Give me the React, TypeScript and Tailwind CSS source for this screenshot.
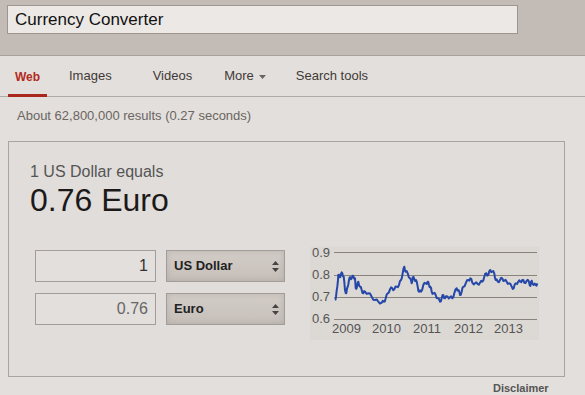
import React from 'react';

const raw: [number, number][] = [
  [90, 180], [93, 170], [97, 140], [100, 105], [104, 112], [108, 102], [112, 100], [116, 110], [120, 150],
  [124, 160], [128, 140], [132, 120], [136, 112], [140, 115], [145, 108], [150, 115], [152, 145], [156, 140],
  [160, 125], [165, 140], [170, 150], [175, 160], [180, 155], [190, 160], [200, 170], [210, 180], [220, 185],
  [230, 188], [237, 185], [242, 175], [248, 160], [255, 148], [262, 145], [268, 148], [275, 140], [282, 135],
  [288, 120], [293, 100], [298, 80], [302, 95], [308, 100], [315, 115], [320, 130], [323, 112], [328, 118],
  [333, 120], [338, 140], [342, 155], [348, 155], [355, 135], [362, 130], [368, 125], [372, 135], [376, 140],
  [380, 155], [385, 160], [392, 165], [398, 175], [405, 185], [410, 175], [415, 165], [420, 175], [428, 170],
  [435, 172], [442, 175], [448, 160], [455, 145], [460, 150], [465, 165], [470, 155], [475, 140], [482, 130],
  [490, 120], [496, 115], [502, 128], [510, 130], [518, 132], [525, 128], [532, 125], [538, 110], [544, 100],
  [550, 105], [556, 90], [562, 95], [568, 100], [572, 120], [578, 125], [585, 120], [592, 115], [598, 122],
  [605, 125], [612, 130], [620, 140], [626, 145], [632, 130], [640, 125], [646, 125], [652, 120], [658, 128],
  [665, 122], [672, 125], [676, 138], [680, 122], [686, 135], [692, 135], [697, 130],
];

// zoom coords -> chart-local coords, with a little wobble between samples
const points = raw
  .flatMap(([zx, zy], i) => {
    const x = zx / 3 - 5;
    const y = zy / 3 - 7;
    const next = raw[i + 1];
    if (!next) return [[x, y]];
    const nx = next[0] / 3 - 5;
    const ny = next[1] / 3 - 7;
    const wob = i % 2 === 0 ? 1.4 : -1.4;
    return [[x, y], [(x + nx) / 2, (y + ny) / 2 + wob]];
  })
  .map(([x, y]) => `${x.toFixed(1)},${y.toFixed(1)}`)
  .join(' ');

const Arrows = () => (
  <svg width="7" height="11" viewBox="0 0 7 11" className="shrink-0">
    <path d="M3.5 0 L7 4 L0 4 Z" fill="#444" />
    <path d="M3.5 11 L7 7 L0 7 Z" fill="#444" />
  </svg>
);

const RateChart = () => (
  <div className="relative w-[229px] h-[93px] bg-[#dcd8d4] text-[13px] text-[#555] leading-none">
    <svg width="229" height="93" className="absolute left-0 top-0">
      {[5, 28, 50, 72].map((y) => (
        <line key={y} x1="24" x2="227" y1={y + 0.5} y2={y + 0.5} stroke="#8a827c" strokeWidth="1" />
      ))}
      <polyline points={points} fill="none" stroke="#2447a8" strokeWidth="2" strokeLinejoin="round" />
    </svg>
    {[['0.9', -1], ['0.8', 21], ['0.7', 43], ['0.6', 65]].map(([t, y]) => (
      <span key={t} className="absolute left-[2px]" style={{ top: Number(y) }}>{t}</span>
    ))}
    {[['2009', 22], ['2010', 62], ['2011', 103], ['2012', 144], ['2013', 184]].map(([t, x]) => (
      <span key={t} className="absolute top-[75px]" style={{ left: Number(x) }}>{t}</span>
    ))}
  </div>
);

export default function App() {
  return (
    <div className="w-[585px] h-[395px] overflow-hidden bg-[#e3dfdc] font-['Liberation_Sans',Arial,sans-serif]">
      <div className="h-[56px] bg-[#c2bbb6] border-b border-[#a8a19c] pt-[5px] pl-[7px]">
        <div className="w-[511px] h-[29px] bg-[#ebe8e5] border border-[#9c9590] pl-[7px] flex items-center text-[17px] text-[#111]">
          Currency Converter
        </div>
      </div>

      <div className="h-[41px] border-b border-[#b1aba7] flex items-stretch pl-[8px] text-[13px] text-[#3f3a37]">
        <div className="w-[39px] flex items-center justify-center text-[#b22a1e] font-bold text-[12px] border-b-[3px] border-[#a8281d] pt-[3px] -mb-px">Web</div>
        <div className="ml-[22px] flex items-center">Images</div>
        <div className="ml-[41px] flex items-center">Videos</div>
        <div className="ml-[32px] flex items-center gap-[5px]">
          More
          <svg width="7" height="4" viewBox="0 0 7 4" className="mt-[2px]"><path d="M0 0 L7 0 L3.5 4 Z" fill="#666" /></svg>
        </div>
        <div className="ml-[30px] flex items-center">Search tools</div>
      </div>

      <div className="pl-[17px] pt-[12px] text-[13px] text-[#6a6561] leading-none">
        About 62,800,000 results (0.27 seconds)
      </div>

      <div className="mt-[19px] ml-[8px] w-[557px] h-[236px] border border-[#aaa4a0] bg-[#e1dddb] pl-[21px] pt-[22px]">
        <div className="text-[16px] text-[#555] leading-none">1 US Dollar equals</div>
        <div className="text-[32px] text-[#1c1a19] leading-none mt-[4px]">0.76 Euro</div>

        <div className="flex items-start mt-[31px]">
          <div className="ml-[5px] mt-[3px] flex flex-col gap-[11px]">
            {[['1', 'US Dollar', 'text-[#333]'], ['0.76', 'Euro', 'text-[#666]']].map(([v, c, col]) => (
              <div key={c} className="flex gap-[10px]">
                <div className={`w-[121px] h-[32px] border border-[#a39d99] bg-[#e3dfdc] flex items-center justify-end pr-[7px] text-[16px] ${col}`}>
                  {v}
                </div>
                <div className="w-[119px] h-[32px] border border-[#a39d99] bg-gradient-to-b from-[#d3cdc8] to-[#c6bfba] shadow-[inset_0_0_6px_rgba(120,110,100,0.25)] flex items-center justify-between pl-[7px] pr-[5px] text-[13px] font-bold text-[#222]">
                  {c}
                  <Arrows />
                </div>
              </div>
            ))}
          </div>
          <div className="ml-[25px]">
            <RateChart />
          </div>
        </div>
      </div>

      <div className="pl-[493px] pt-[6px] text-[11px] font-bold text-[#555] leading-none">Disclaimer</div>
    </div>
  );
}
